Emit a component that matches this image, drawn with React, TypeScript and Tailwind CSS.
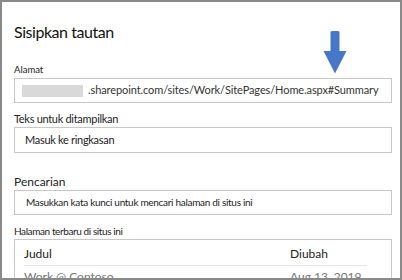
export default function App() {
  return (
    <div className="relative w-[402px] h-[280px] overflow-hidden bg-white border-2 border-[#8a8a8a] pl-[12px] pr-[8px] font-['Lato',sans-serif] text-[#222]">
      {/* blue pointer */}
      <svg className="absolute left-[321px] top-[29px]" width="24" height="43" viewBox="0 0 24 43">
        <path d="M7.5 1.5 Q7.5 0 9 0 H15 Q16.5 0 16.5 1.5 V20 H23.5 L12 42.5 L0.5 20 H7.5 Z" fill="#4677c8" />
      </svg>

      <h1 className="mt-[20px] h-[20px] text-[16px] leading-[20px] tracking-[-0.45px] text-[#111]">Sisipkan tautan</h1>

      <div className="mt-[22px] h-[12px] text-[9.5px] leading-[12px]">Alamat</div>
      <div className="mt-[2px] h-[25px] border border-[#c8c8c8] flex items-center pl-[7px] text-[11px] tracking-[-0.1px] text-[#333]">
        <span className="w-[61px] h-[12px] mr-[5px] bg-[#d9d9d9]" />
        <span>.sharepoint.com/sites/Work/SitePages/Home.aspx#Summary</span>
      </div>

      <div className="mt-[9px] h-[14px] text-[11px] leading-[14px] tracking-[-0.3px]">Teks untuk ditampilkan</div>
      <div className="mt-[1px] h-[26px] border border-[#c8c8c8] flex items-center pl-[10px] text-[11px] tracking-[-0.3px]">
        Masuk ke ringkasan
      </div>

      <div className="mt-[21px] h-[15px] text-[12px] leading-[15px]">Pencarian</div>
      <div className="mt-[1px] h-[25px] border border-[#c8c8c8] flex items-center pl-[11px] text-[10px] tracking-[-0.3px]">
        Masukkan kata kunci untuk mencari halaman di situs ini
      </div>

      <div className="mt-[9px] h-[14px] text-[10px] leading-[14px] tracking-[-0.4px]">Halaman terbaru di situs ini</div>
      <div className="mt-[1px] h-[60px] border border-[#c8c8c8] pl-[9px] pr-[24px]">
        <div className="flex h-[26px] items-end pb-[4px] border-b border-[#e8e8e8] text-[12px] leading-[15px]">
          <span className="w-[266px]">Judul</span>
          <span>Diubah</span>
        </div>
        <div className="flex pt-[3px] text-[12px] leading-[15px] text-[#777]">
          <span className="w-[266px]">Work @ Contoso</span>
          <span>Aug 13, 2019</span>
        </div>
      </div>
    </div>
  );
}
